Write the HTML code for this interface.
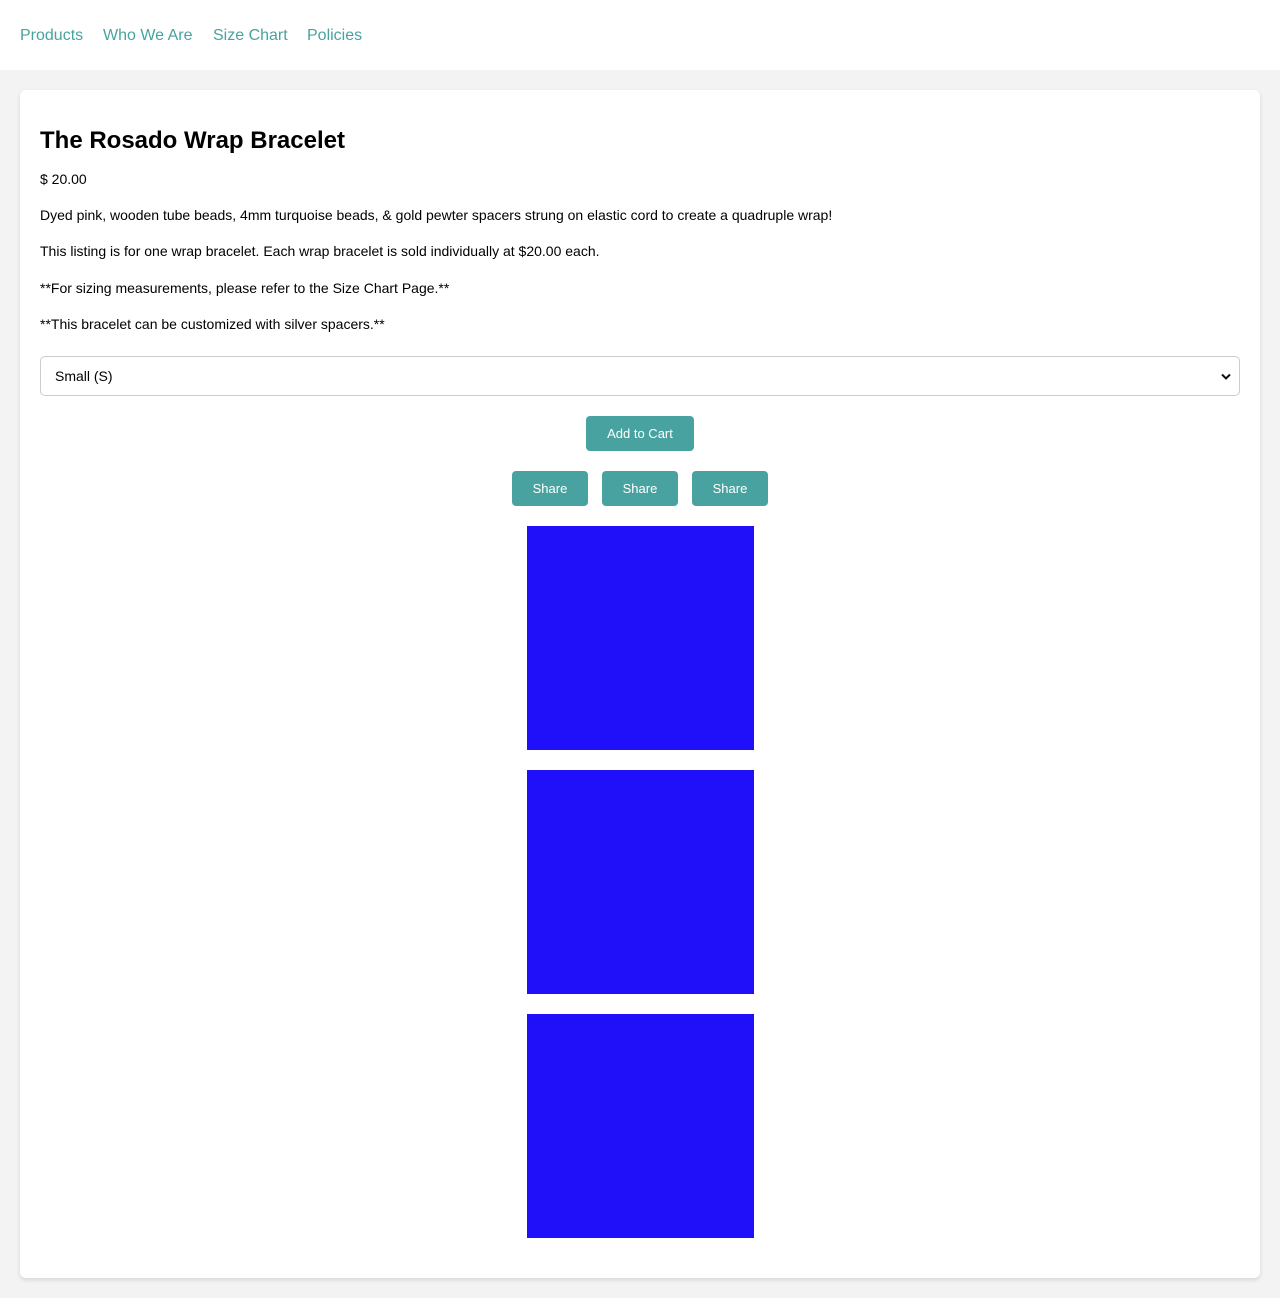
<!DOCTYPE html>
<html><head><meta charset="utf-8"><style>
*{margin:0;padding:0;box-sizing:border-box}
body{width:1280px;height:1298px;background:#f3f3f3;font-family:"Liberation Sans",Arial,sans-serif;position:relative;overflow:hidden}
.nav{position:absolute;left:0;top:0;width:1280px;height:70px;background:#fff}
.nav a{position:absolute;top:27px;font-size:16px;color:#48a3a0;text-decoration:none;line-height:18px}
.card{position:absolute;left:20px;top:90px;width:1240px;height:1188px;background:#fff;border-radius:6px;box-shadow:0 2px 4px rgba(0,0,0,.12)}
.t{position:absolute;left:40px;font-size:14px;color:#000;line-height:16px;white-space:nowrap}
h1{position:absolute;left:40px;top:127px;font-size:24px;font-weight:bold;line-height:28px}
.sel{position:absolute;left:40px;top:356px;width:1200px;height:40px;border:1px solid #ccc;border-radius:5px;background:#fff}
.sel span{position:absolute;left:14px;top:11px;font-size:14px;line-height:16px}
.btn{position:absolute;background:#48a3a0;color:#fff;border-radius:4px;font-size:13px;text-align:center;line-height:35px;height:35px}
.img{position:absolute;left:527px;width:227px;height:224px;background:#1f10f9}
</style></head><body>
<div class="nav">
<a style="left:20px">Products</a><a style="left:103px">Who We Are</a><a style="left:213px">Size Chart</a><a style="left:307px">Policies</a>
</div>
<div class="card"></div>
<h1>The Rosado Wrap Bracelet</h1>
<div class="t" style="top:171px">$ 20.00</div>
<div class="t" style="top:207px">Dyed pink, wooden tube beads, 4mm turquoise beads, &amp; gold pewter spacers strung on elastic cord to create a quadruple wrap!</div>
<div class="t" style="top:243px">This listing is for one wrap bracelet. Each wrap bracelet is sold individually at $20.00 each.</div>
<div class="t" style="top:280px">**For sizing measurements, please refer to the Size Chart Page.**</div>
<div class="t" style="top:316px">**This bracelet can be customized with silver spacers.**</div>
<div class="sel"><span>Small (S)</span>
<svg style="position:absolute;right:8px;top:16px" width="10" height="8" viewBox="0 0 10 8"><path d="M1 1.5L5 5.5L9 1.5" stroke="#111" stroke-width="2" fill="none"/></svg></div>
<div class="btn" style="left:586px;top:416px;width:108px">Add to Cart</div>
<div class="btn" style="left:512px;top:471px;width:76px">Share</div>
<div class="btn" style="left:602px;top:471px;width:76px">Share</div>
<div class="btn" style="left:692px;top:471px;width:76px">Share</div>
<div class="img" style="top:526px"></div>
<div class="img" style="top:770px"></div>
<div class="img" style="top:1014px"></div>
</body></html>
